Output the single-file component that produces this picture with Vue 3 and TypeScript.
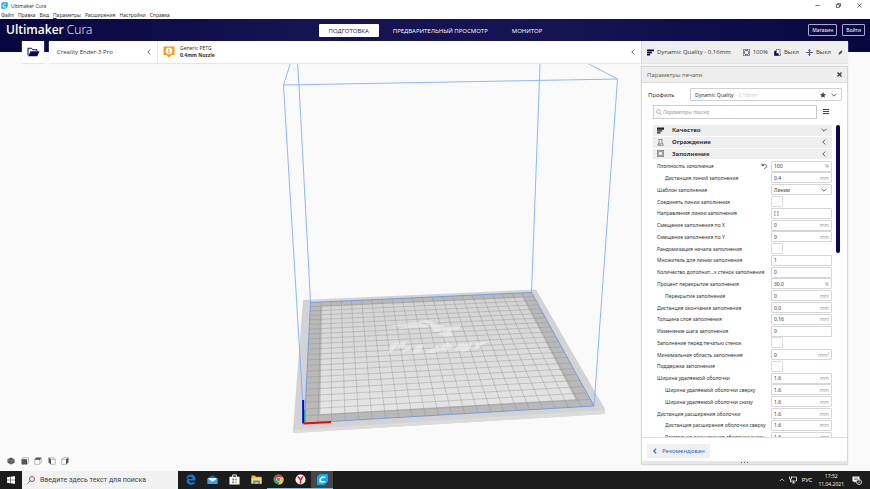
<script setup lang="ts">
interface Setting {
  label: string
  kind: 'text' | 'check' | 'select'
  value?: string
  unit?: string
  nested?: boolean
  changed?: boolean
}

const menus = ['Файл', 'Правка', 'Вид', 'Параметры', 'Расширения', 'Настройки', 'Справка']

const stages = ['ПОДГОТОВКА', 'ПРЕДВАРИТЕЛЬНЫЙ ПРОСМОТР', 'МОНИТОР']

const categories = [
  { name: 'Качество', icon: 'layers', open: true },
  { name: 'Ограждение', icon: 'shell', open: false },
  { name: 'Заполнение', icon: 'infill', open: false },
]

const settings: Setting[] = [
  { label: 'Плотность заполнения', kind: 'text', value: '100', unit: '%', changed: true },
  { label: 'Дистанция линий заполнения', kind: 'text', value: '0.4', unit: 'mm', nested: true },
  { label: 'Шаблон заполнения', kind: 'select', value: 'Линии' },
  { label: 'Соединять линии заполнения', kind: 'check' },
  { label: 'Направления линии заполнения', kind: 'text', value: '[ ]' },
  { label: 'Смещение заполнения по X', kind: 'text', value: '0', unit: 'mm' },
  { label: 'Смещение заполнения по Y', kind: 'text', value: '0', unit: 'mm' },
  { label: 'Рандомизация начала заполнения', kind: 'check' },
  { label: 'Множитель для линии заполнения', kind: 'text', value: '1' },
  { label: 'Количество дополнит...х стенок заполнения', kind: 'text', value: '0' },
  { label: 'Процент перекрытие заполнения', kind: 'text', value: '30.0', unit: '%' },
  { label: 'Перекрытие заполнения', kind: 'text', value: '0', unit: 'mm', nested: true },
  { label: 'Дистанция окончания заполнения', kind: 'text', value: '0.0', unit: 'mm' },
  { label: 'Толщина слоя заполнения', kind: 'text', value: '0.16', unit: 'mm' },
  { label: 'Изменение шага заполнения', kind: 'text', value: '0' },
  { label: 'Заполнение перед печатью стенок', kind: 'check' },
  { label: 'Минимальная область заполнения', kind: 'text', value: '0', unit: 'mm²' },
  { label: 'Поддержка заполнения', kind: 'check' },
  { label: 'Ширина удаляемой оболочки', kind: 'text', value: '1.6', unit: 'mm' },
  { label: 'Ширина удаляемой оболочки сверху', kind: 'text', value: '1.6', unit: 'mm', nested: true },
  { label: 'Ширина удаляемой оболочки снизу', kind: 'text', value: '1.6', unit: 'mm', nested: true },
  { label: 'Дистанция расширения оболочки', kind: 'text', value: '1.6', unit: 'mm' },
  { label: 'Дистанция расширения оболочки сверху', kind: 'text', value: '1.6', unit: 'mm', nested: true },
  { label: 'Расстояние расширения оболочки снизу', kind: 'text', value: '1.6', unit: 'mm', nested: true },
]

type Point = [number, number]

/* Projects the unit square of the build plate onto its four screen corners. */
function projector(tl: Point, tr: Point, br: Point, bl: Point) {
  const dx1 = tr[0] - br[0]
  const dx2 = bl[0] - br[0]
  const dx3 = tl[0] - tr[0] + br[0] - bl[0]
  const dy1 = tr[1] - br[1]
  const dy2 = bl[1] - br[1]
  const dy3 = tl[1] - tr[1] + br[1] - bl[1]
  const det = dx1 * dy2 - dx2 * dy1
  const g = (dx3 * dy2 - dx2 * dy3) / det
  const h = (dx1 * dy3 - dx3 * dy1) / det
  const a = tr[0] - tl[0] + g * tr[0]
  const b = bl[0] - tl[0] + h * bl[0]
  const d = tr[1] - tl[1] + g * tr[1]
  const e = bl[1] - tl[1] + h * bl[1]
  return (u: number, v: number): Point => {
    const w = g * u + h * v + 1
    return [(a * u + b * v + tl[0]) / w, (d * u + e * v + tl[1]) / w]
  }
}

const plate = projector([310.5, 302.5], [531.5, 292.5], [594, 406], [304.5, 423])
const CELLS = 22
const poly = (a: number, b: number) =>
  [plate(a, a), plate(b, a), plate(b, b), plate(a, b)].map((p) => p.map((n) => n.toFixed(2)).join(',')).join(' ')
const segment = (p: Point, q: Point) =>
  `M${p[0].toFixed(2)} ${p[1].toFixed(2)}L${q[0].toFixed(2)} ${q[1].toFixed(2)}`
const outer = poly(0, 1)
const inner = poly(1.15 / CELLS, 1 - 1.15 / CELLS)
const gridPath = Array.from({ length: CELLS - 1 }, (_, i) => (i + 1) / CELLS)
  .map((t) => segment(plate(t, 0), plate(t, 1)) + segment(plate(0, t), plate(1, t)))
  .join('')
</script>

<template>
  <div class="app">
    <div class="titlebar">
      <svg class="app-icon" viewBox="0 0 24 24" aria-hidden="true">
        <path d="M6 1h17v14l-8 8H1V6z" fill="#12a9e8" />
        <path d="M17 7H11L7 11v6h10" fill="none" stroke="#fff" stroke-width="3.4" />
      </svg>
      <span class="app-title">Ultimaker Cura</span>
      <div class="window-buttons">
        <button aria-label="Свернуть"><svg viewBox="0 0 12 12"><path d="M1 6h10" /></svg></button>
        <button aria-label="Окно"><svg viewBox="0 0 12 12"><path d="M1 4h7v7H1zM4 4V1h7v7H8" /></svg></button>
        <button aria-label="Закрыть"><svg viewBox="0 0 12 12"><path d="M1 1l10 10M11 1L1 11" /></svg></button>
      </div>
    </div>

    <nav class="menubar">
      <button v-for="m in menus" :key="m" :class="{ hot: m === 'Параметры' }">{{ m }}</button>
    </nav>

    <header class="header">
      <div class="logo"><b>Ultimaker</b> Cura</div>
      <nav class="stages">
        <button v-for="(s, i) in stages" :key="s" :class="{ active: i === 0 }">{{ s }}</button>
      </nav>
      <div class="account">
        <button>Магазин</button>
        <button>Войти</button>
      </div>
    </header>

    <section class="stagebar">
      <button class="open-file" aria-label="Открыть файл">
        <svg viewBox="0 0 26 20"><path d="M2 17V2.500h7l2.500 3H20V8" fill="none" stroke="#0a0850" stroke-width="2" /><path d="M7 8.500h18l-4.500 10H2.500z" fill="#0a0850" /></svg>
      </button>
      <div class="config">
        <button class="printer">
          <span>Creality Ender-3 Pro</span>
          <svg class="chev" viewBox="0 0 10 10"><path d="M7 1L3 5l4 4" /></svg>
        </button>
        <button class="material">
          <svg class="extruder" viewBox="0 0 24 24">
            <path d="M1 1h22v17h-6l-5 5-5-5H1z" fill="#f5a01c" />
            <circle cx="12" cy="10" r="6.500" fill="#fff" />
            <path d="M12 6v8M10.500 7.500L12 6" stroke="#f5a01c" stroke-width="2" fill="none" />
          </svg>
          <span class="material-text"><span>Generic PETG</span><b>0.4mm Nozzle</b></span>
          <svg class="chev" viewBox="0 0 10 10"><path d="M7 1L3 5l4 4" /></svg>
        </button>
        <button class="summary">
          <svg class="s-icon" viewBox="0 0 16 16"><path d="M0 1h16v4H0zM0 6.500h11v3.500H0zM0 11.500h7V15H0z" fill="#0a0850" /></svg>
          <span class="quality">Dynamic Quality - 0.16mm</span>
          <svg class="s-icon line" viewBox="0 0 16 16"><rect x="1" y="1" width="14" height="14" stroke-dasharray="3 1" /><path d="M5 3.500h6L13 6v4l-2 2.500H5L3 10V6z" /></svg>
          <span class="pct">100%</span>
          <svg class="s-icon line" viewBox="0 0 16 16"><path d="M1 5h4v5l5 1v4H1z" fill="#0a0850" /><path d="M5 5V1h9v10M11 15h4v-3" stroke-dasharray="3 1" /></svg>
          <span class="onoff">Выкл</span>
          <svg class="s-icon line" viewBox="0 0 16 16"><path d="M0 8h16M8 0v5M8 11v5M5.500 3L8 6l2.500-3M5.500 13L8 10l2.500 3" /></svg>
          <span class="onoff">Выкл</span>
          <svg class="pencil" viewBox="0 0 12 12"><path d="M1 11l1-4 6-6 3 3-6 6z" fill="#444" /></svg>
        </button>
      </div>
    </section>

    <main class="workspace">
      <svg class="scene" viewBox="0 52 870 419" role="img" aria-label="Стол принтера">
        <defs>
          <linearGradient id="plateShade" x1="0" y1="0" x2="0" y2="1">
            <stop offset="0" stop-color="#d3d3d3" />
            <stop offset="1" stop-color="#e5e5e5" />
          </linearGradient>
        </defs>
        <path d="M303 300L536 289.500 605 409v5L293 433v-3z" fill="#d3d3d3" />
        <path d="M293 430L605 410v4L293 433z" fill="#dcdcdc" />
        <polygon :points="outer" fill="#b9b9b9" />
        <polygon :points="inner" fill="url(#plateShade)" />
        <path :d="gridPath" fill="none" stroke="#8d8d8d" stroke-opacity=".42" stroke-width=".9" />
        <g fill="#f2f2f2" opacity=".6">
          <path d="M387 326l14-2h8l-4 2zM398 329l10-3 18-1 4 2-20 1z" />
          <path d="M402 324l18-2 6 3-16 2zM420 321l8-1 10 4-8 1zM430 325l12 0 4 5-12 2z" />
          <path d="M442 327l18-1v3l-12 2zM438 333l12-3 2 6-8 1z" />
          <path d="M381 357l7-3 3-10 8-2-4 6-5 5zM397 344l10-3-3 6-6 1zM401 353l9-3 2-5-7 3z" />
          <path d="M412 354l4-8 8-2-4 8zM424 353l8-4 6-4 2 5-6 3zM438 350l6-6 4-2 5 5-8 4z" />
          <path d="M455 350l3-6 14-1-2 6-6 3zM474 350l2-7 13-2-8 5z" />
        </g>
        <polygon :points="outer" fill="none" stroke="#6c98e0" stroke-width=".9" />
        <g fill="none" stroke="#80b0fb" stroke-width=".9">
          <path d="M290.500 63L283.500 85 617.500 79 587 63" />
          <path d="M297.500 63L299 85 310.500 302.500" />
          <path d="M283.500 85L304 423" />
          <path d="M540.500 52L531.500 293" />
          <path d="M617.500 79L594 406" />
        </g>
        <path d="M305 409.500v13" stroke="#10e030" stroke-width="1.500" />
        <path d="M303.200 400v23.500" stroke="#0000f0" stroke-width="2" />
        <path d="M303.500 423.500L331 422" stroke="#f00" stroke-width="2.200" />
      </svg>

      <div class="views">
        <button aria-label="3D-вид"><svg viewBox="0 0 16 16"><path d="M8 1l7 3.500v7L8 15l-7-3.500v-7z" fill="#555" /><path d="M1 5l7 3.500L15 5M8 8.500V15" stroke="#aaa" fill="none" /></svg></button>
        <button aria-label="Вид спереди"><svg viewBox="0 0 16 16"><path d="M4 1.500h11v10l-3 3V4.500H1.500z" fill="#fff" stroke="#777" /><path d="M1 4.500h11V15H1z" fill="#555" /></svg></button>
        <button aria-label="Вид сверху"><svg viewBox="0 0 16 16"><path d="M1.500 5h10v9.500h-10zM11.500 5l3-3v9l-3 3" fill="#fff" stroke="#777" /><path d="M4 1h11l-3 4.500H1z" fill="#555" /></svg></button>
        <button aria-label="Вид слева"><svg viewBox="0 0 16 16"><path d="M5 4.500h9.500v10H5zM1.500 1.500h9l4 3" fill="#fff" stroke="#777" /><path d="M1 1l5 3.500V15l-5-4z" fill="#555" /></svg></button>
        <button aria-label="Вид справа"><svg viewBox="0 0 16 16"><path d="M1.500 4.500H11v10H1.500zM1.500 4.500l4-3h9" fill="#fff" stroke="#777" /><path d="M10 4.500L15 1v10l-5 4z" fill="#555" /></svg></button>
      </div>

      <aside class="panel">
        <div class="panel-head">
          <h2>Параметры печати</h2>
          <button aria-label="Закрыть панель"><svg viewBox="0 0 10 10"><path d="M1 1l8 8M9 1L1 9" stroke="#333" stroke-width="2.200" /></svg></button>
        </div>

        <div class="profile">
          <span id="profile-label">Профиль</span>
          <button class="profile-select" aria-haspopup="listbox" aria-labelledby="profile-label">
            <span>Dynamic Quality</span><span class="dim">- 0.16mm</span>
            <svg class="star" viewBox="0 0 12 12"><path d="M6 0l1.800 4 4.200.4-3.200 2.900 1 4.400L6 9.400 2.200 11.700l1-4.400L0 4.400 4.200 4z" fill="#444" /></svg>
            <svg class="chev" viewBox="0 0 10 10"><path d="M1 3l4 4 4-4" /></svg>
          </button>
        </div>

        <div class="search-row">
          <label class="search">
            <svg viewBox="0 0 12 12"><circle cx="5" cy="5" r="4" /><path d="M8 8l4 4" /></svg>
            <input type="text" placeholder="Параметры поиска" aria-label="Параметры поиска" />
          </label>
          <button class="burger" aria-label="Видимость параметров"><svg viewBox="0 0 6 6"><path d="M0 .5h6M0 2.500h6M0 4.500h6" stroke="#444" stroke-width="1" /></svg></button>
        </div>

        <div class="list-wrap">
          <div class="list">
            <button v-for="c in categories" :key="c.name" class="category">
              <svg class="cat-icon" viewBox="0 0 16 16">
                <path v-if="c.icon === 'layers'" d="M0 1h16v5H0zM0 7.500h12v3H0zM0 12h8v3H0z" fill="#222" />
                <path v-else-if="c.icon === 'shell'" d="M3 1h10M5 1v5L1.500 14.500h13L11 6V1M4 11h3v3M8 10h4" class="stroke" />
                <path v-else d="M1 1h14v14H1zM5 3.500h6L13 6v4l-2 2.500H5L3 10V6zM1 1l3 3M15 1l-3 3M1 15l3-3M15 15l-3-3" class="stroke" />
              </svg>
              <span>{{ c.name }}</span>
              <svg class="chev" viewBox="0 0 10 10"><path :d="c.open ? 'M1 3l4 4 4-4' : 'M7 1L3 5l4 4'" /></svg>
            </button>

            <div v-for="(s, i) in settings" :key="s.label" class="setting">
              <label :for="`setting-${i}`" :class="{ nested: s.nested, changed: s.changed }">{{ s.label }}</label>
              <button v-if="s.changed" class="reset" aria-label="Сбросить">
                <svg viewBox="0 0 12 12"><path d="M2 1v4h4M2 5c3-4 9-2 9 1.500 0 3-3 4.500-5 4.500" fill="none" stroke="#333" stroke-width="1.500" /></svg>
              </button>
              <div v-if="s.kind === 'text'" class="field">
                <input :id="`setting-${i}`" type="text" :value="s.value" />
                <span v-if="s.unit" class="unit">{{ s.unit }}</span>
              </div>
              <div v-else-if="s.kind === 'select'" class="field">
                <select :id="`setting-${i}`"><option>{{ s.value }}</option></select>
                <svg class="chev" viewBox="0 0 10 10"><path d="M1 3l4 4 4-4" /></svg>
              </div>
              <div v-else class="check"><input :id="`setting-${i}`" type="checkbox" /></div>
            </div>
          </div>
          <div class="track"><div class="thumb"></div></div>
        </div>

        <div class="panel-foot">
          <button><svg class="chev" viewBox="0 0 10 10"><path d="M7 1L3 5l4 4" /></svg>Рекомендован</button>
        </div>
        <div class="grip"><i></i><i></i><i></i></div>
      </aside>
    </main>

    <footer class="taskbar">
      <button class="start" aria-label="Пуск"><svg viewBox="0 0 16 16"><path d="M0 2.500l7-1v6H0zM8 1.300L16 0v7.500H8zM0 8.500h7v6l-7-1zM8 8.500h8V16l-8-1.300z" fill="#fff" /></svg></button>
      <label class="task-search">
        <svg viewBox="0 0 16 16"><circle cx="10" cy="6" r="5" /><path d="M6.500 9.500L1 15" /></svg>
        <input type="text" placeholder="Введите здесь текст для поиска" aria-label="Поиск" />
      </label>
      <div class="apps">
        <button aria-label="Edge"><svg viewBox="0 0 24 24"><path d="M2 11C3 4 8 1 13 1c6 0 10 4 10 10v3H9c0 6 8 6 12 3v5C12 26 3 23 4 14c.5-4 3-6 6-7-1 1-2 2-2 4h8c0-7-9-6-14 0z" fill="#0f7bd8" /></svg></button>
        <button aria-label="Почта"><svg viewBox="0 0 24 24"><path d="M1 9L12 2l11 7v13H1z" fill="#1267b4" /><path d="M3 9h18v9H3z" fill="#fff" /><path d="M1 9l11 8 11-8v13H1z" fill="#29a6e8" /></svg></button>
        <button aria-label="Магазин"><svg viewBox="0 0 24 24"><path d="M8 7V2h8v5" fill="none" stroke="#fff" stroke-width="2" /><path d="M1 6h22v17H1z" fill="#fff" /><path d="M7 10h4v4H7z" fill="#e8502a" /><path d="M13 10h4v4h-4z" fill="#7cb82f" /><path d="M7 16h4v4H7z" fill="#2b9fe0" /><path d="M13 16h4v4h-4z" fill="#f8b713" /></svg></button>
        <button aria-label="Проводник"><svg viewBox="0 0 24 24"><path d="M1 3h8l2 3h12v15H1z" fill="#e9ae2c" /><path d="M1 8h22v13H1z" fill="#fbd766" /><path d="M5 14h14v8h-4v-4H9v4H5z" fill="#3e8fd0" /></svg></button>
        <button class="running" aria-label="Chrome"><svg viewBox="0 0 24 24"><circle cx="12" cy="12" r="11" fill="#35a552" /><path d="M2.500 6.500A11 11 0 0 1 22 7H12L8 14z" fill="#e23f33" /><path d="M22 7a11 11 0 0 1-11 16l5-9V7z" fill="#fbc914" /><circle cx="12" cy="12" r="5" fill="#fff" /><circle cx="12" cy="12" r="4" fill="#4285f4" /></svg></button>
        <button class="running" aria-label="Яндекс Браузер"><svg viewBox="0 0 24 24"><circle cx="12" cy="12" r="11" fill="#f4f4f4" /><path d="M6.500 5L12 13l5.500-8M12 12v9" fill="none" stroke="#e11d1d" stroke-width="3.200" /></svg></button>
        <button class="running current" aria-label="Cura"><svg viewBox="0 0 24 24"><path d="M6 0h18v16l-8 8H0V6z" fill="#12a9e8" /><path d="M18 7h-7L7 11v6h11" fill="none" stroke="#fff" stroke-width="3.200" /></svg></button>
      </div>
      <div class="tray">
        <svg class="t-icon" viewBox="0 0 16 16"><path d="M2 11l6-6 6 6" /></svg>
        <svg class="t-icon wide" viewBox="0 0 16 16"><path d="M4 2h11v8H4M9 10v4M6 14h6M1 1v5h4V1M3 6v6h2" /></svg>
        <span class="lang">РУС</span>
        <span class="clock"><span>17:52</span><span>11.04.2021</span></span>
        <button class="notify" aria-label="Уведомления: 2">
          <svg viewBox="0 0 16 16"><path d="M1 1h14v10H8l-3 3v-3H1z" fill="#fff" /><path d="M4 4h8M4 7h8" stroke="#222" /></svg>
          <span class="badge">2</span>
        </button>
      </div>
    </footer>
  </div>
</template>

<style>
body {
  margin: 0;
}
</style>

<style scoped>
.app {
  display: flex;
  flex-direction: column;
  height: 100vh;
  overflow: hidden;
  background: #fafafa;
  color: #333;
  font: 5px/8px "Noto Sans", "Open Sans", sans-serif;
}
.app * {
  box-sizing: border-box;
}
button,
input,
select {
  margin: 0;
  padding: 0;
  border: 0;
  border-radius: 0;
  background: none;
  color: inherit;
  font: inherit;
  outline: none;
}
svg {
  flex: none;
  display: block;
}
.chev {
  width: 6px;
  height: 6px;
  fill: none;
  stroke: #333;
  stroke-width: 1.3;
}

/* Title bar and menu */
.titlebar {
  display: flex;
  align-items: center;
  gap: 3px;
  height: 11px;
  flex: none;
  padding-left: 1px;
  background: #fff;
}
.app-icon {
  width: 7px;
  height: 7px;
}
.window-buttons {
  display: flex;
  margin-left: auto;
}
.window-buttons button {
  display: grid;
  place-items: center;
  width: 21px;
  height: 10px;
}
.window-buttons svg {
  width: 5px;
  height: 5px;
  fill: none;
  stroke: #222;
  stroke-width: 1.6;
}
.menubar {
  display: flex;
  gap: 4px;
  height: 8px;
  flex: none;
  padding-left: 1px;
  background: #fff;
}
.menubar button {
  line-height: 7px;
}
.hot::first-letter {
  text-decoration: underline;
}

/* Header */
.header {
  display: grid;
  grid-template-columns: 1fr auto 1fr;
  align-items: start;
  flex: none;
  height: 33px;
  padding: 5px 5px 0 6px;
  background: linear-gradient(90deg, #08073f, #161352 35%, #161352 65%, #08073f);
  color: #fff;
}
.logo {
  font-family: "Open Sans", "Noto Sans", sans-serif;
  font-size: 12px;
  line-height: 12px;
  font-weight: 300;
}
.logo b {
  font-weight: 600;
}
.stages {
  display: flex;
  gap: 4px;
}
.stages button {
  height: 13px;
  padding: 0 10px;
  border-radius: 1px;
  font-family: "Open Sans", "Noto Sans", sans-serif;
  font-size: 6px;
}
.stages .active {
  background: #fff;
  color: #161352;
}
.account {
  display: flex;
  justify-content: flex-end;
  gap: 5px;
}
.account button {
  height: 12px;
  padding: 0 3px;
  border: 1px solid #a9a8c8;
  border-radius: 1px;
  font-size: 5px;
}

/* Stage bar */
.stagebar {
  position: relative;
  z-index: 1;
  display: flex;
  gap: 5px;
  flex: none;
  height: 22px;
  margin: -11px 22px 0;
}
.open-file {
  display: grid;
  place-items: center;
  width: 22px;
  background: #fff;
  box-shadow: 0 1px 1px #e6e6e6;
}
.open-file svg {
  width: 13px;
  height: 10px;
}
.config {
  display: grid;
  grid-template-columns: 109px 1fr 207px;
  flex: 1;
  background: #fff;
  box-shadow: 0 1px 1px #e6e6e6;
  font-family: "Open Sans", "Noto Sans", sans-serif;
  font-size: 6px;
}
.config button {
  display: flex;
  align-items: center;
  text-align: left;
}
.config .printer {
  justify-content: space-between;
  padding: 0 5px 0 8px;
  border-right: 1px solid #e6e6e6;
}
.config .material {
  padding: 0 5px;
}
.extruder {
  width: 12px;
  height: 12px;
  margin-right: 5px;
}
.material-text {
  display: flex;
  flex-direction: column;
  flex: 1;
  font-family: "Noto Sans", sans-serif;
  font-size: 5px;
  line-height: 7px;
}
.config .summary {
  padding: 0 5px;
  border-left: 1px solid #d8d8d8;
  background: #eee;
}
.s-icon {
  width: 7px;
  height: 7px;
  margin-right: 3px;
}
.s-icon.line {
  fill: none;
  stroke: #0a0850;
  stroke-width: 1.4;
}
.quality {
  flex: 1;
}
.pct {
  margin-right: 6px;
}
.onoff {
  margin-right: 7px;
}
.pencil {
  width: 5px;
  height: 5px;
}

/* Workspace */
.workspace {
  position: relative;
  display: flex;
  justify-content: space-between;
  align-items: stretch;
  flex: 1;
  min-height: 0;
  padding: 3px 22px 6px 7px;
}
.scene {
  position: absolute;
  inset: -11px 0 0;
  width: 100%;
  height: calc(100% + 11px);
}
.views {
  position: relative;
  display: flex;
  justify-content: space-between;
  align-self: flex-end;
  width: 62px;
}
.views svg {
  width: 8px;
  height: 8px;
}

/* Settings panel */
.panel {
  position: relative;
  display: flex;
  flex-direction: column;
  width: 207px;
  border: 1px solid #d8d8d8;
  background: #fff;
  box-shadow: 0 0 1px #ccc;
}
.panel-head {
  display: flex;
  align-items: center;
  justify-content: space-between;
  flex: none;
  height: 16px;
  padding: 0 5px;
  border-bottom: 1px solid #ddd;
  background: #eee;
}
.panel-head h2 {
  margin: 0;
  color: #666;
  font-size: 6px;
  font-weight: 400;
}
.panel-head svg {
  width: 5px;
  height: 5px;
}
.profile {
  display: flex;
  align-items: center;
  flex: none;
  margin: 5px 5px 0 6px;
  font-size: 6px;
}
.profile > span {
  width: 42px;
}
.profile-select {
  display: flex;
  align-items: center;
  flex: 1;
  height: 13px;
  padding: 0 4px;
  border: 1px solid #d0d0d0;
  border-radius: 1px;
  font-size: 5px;
}
.dim {
  flex: 1;
  padding-left: 2px;
  color: #ccc;
  text-align: left;
}
.star {
  width: 6px;
  height: 6px;
  margin-right: 5px;
}
.search-row {
  display: flex;
  align-items: center;
  flex: none;
  gap: 6px;
  margin: 4px 18px 6px 11px;
}
.search {
  display: flex;
  align-items: center;
  flex: 1;
  gap: 1px;
  height: 14px;
  padding: 0 2px;
  border: 1px solid #ccc;
}
.search svg {
  width: 6px;
  height: 6px;
  fill: none;
  stroke: #777;
}
.search input {
  flex: 1;
  min-width: 0;
}
.search input::placeholder {
  color: #999;
  font-style: italic;
}
.burger svg {
  width: 6px;
  height: 6px;
}
.list-wrap {
  display: flex;
  gap: 4px;
  flex: 1;
  min-height: 0;
  margin: 0 7px 0 11px;
  overflow: hidden;
}
.list {
  display: grid;
  grid-template-rows: repeat(27, minmax(0, 1fr));
  flex: 1;
  height: 318px;
}
.category {
  display: flex;
  align-items: center;
  gap: 8px;
  margin-bottom: 1px;
  padding: 0 5px 0 4px;
  background: #eee;
  font-size: 6px;
  font-weight: 700;
  text-align: left;
}
.category span {
  flex: 1;
}
.cat-icon {
  width: 7px;
  height: 7px;
}
.stroke {
  fill: none;
  stroke: #444;
  stroke-width: 1.2;
}
.setting {
  display: flex;
  align-items: center;
  padding-left: 4px;
}
.setting label {
  flex: 1;
  white-space: nowrap;
}
.setting .nested {
  padding-left: 8px;
}
.setting .changed {
  font-style: italic;
}
.reset {
  margin-right: 4px;
}
.reset svg {
  width: 6px;
  height: 6px;
}
.field {
  display: flex;
  align-items: center;
  width: 61px;
  height: 11px;
  padding: 0 2px;
  border: 1px solid #d6d6d6;
  border-radius: 1px;
}
.field input,
.field select {
  flex: 1;
  min-width: 0;
  appearance: none;
}
.field .chev {
  margin-right: 2px;
}
.unit {
  color: #999;
}
.check {
  display: flex;
  width: 61px;
}
.check input {
  width: 12px;
  height: 11px;
  border: 1px solid #dcdcdc;
  border-radius: 1px;
  appearance: none;
}
.track {
  width: 4px;
}
.thumb {
  height: 41%;
  border-radius: 2px;
  background: #0a0850;
}
.panel-foot {
  flex: none;
  padding: 6px 5px 3px;
  border-top: 1px solid #ddd;
}
.panel-foot button {
  display: flex;
  align-items: center;
  gap: 4px;
  height: 14px;
  padding: 0 5px;
  background: #f0f0f0;
  color: #1d6fe0;
  font-size: 6px;
}
.panel-foot .chev {
  stroke: #1d6fe0;
  stroke-width: 2;
}
.grip {
  display: flex;
  align-items: center;
  justify-content: center;
  gap: 2px;
  flex: none;
  height: 3px;
  background: #e6e6e6;
}
.grip i {
  width: 1px;
  height: 1px;
  background: #555;
}

/* Taskbar */
.taskbar {
  display: flex;
  flex: none;
  height: 18px;
  background: #1c1c1c;
  color: #eee;
}
.start {
  display: grid;
  place-items: center;
  width: 22px;
}
.start svg {
  width: 8px;
  height: 8px;
}
.task-search {
  display: flex;
  align-items: center;
  gap: 5px;
  width: 156px;
  padding: 0 5px;
  background: #f1f1f1;
}
.task-search svg {
  width: 8px;
  height: 8px;
  fill: none;
  stroke: #222;
  stroke-width: 1.3;
}
.task-search input {
  flex: 1;
  min-width: 0;
  font-family: Roboto, "Open Sans", sans-serif;
  font-size: 7px;
}
.task-search input::placeholder {
  color: #444;
}
.apps {
  display: flex;
  padding-left: 1px;
}
.apps button {
  display: grid;
  place-items: center;
  width: 22px;
  border-bottom: 1px solid transparent;
}
.apps svg {
  width: 11px;
  height: 11px;
}
.apps .running {
  border-bottom-color: #76b9ed;
}
.apps .current {
  background: #464646;
}
.tray {
  display: flex;
  align-items: center;
  margin-left: auto;
  padding-right: 10px;
}
.t-icon {
  width: 6px;
  height: 6px;
  margin-right: 4px;
  fill: none;
  stroke: #fff;
  stroke-width: 1.8;
}
.t-icon.wide {
  width: 8px;
  height: 8px;
  margin-right: 5px;
  stroke-width: 1.5;
}
.lang {
  margin-right: 6px;
  font-size: 6px;
}
.clock {
  display: flex;
  flex-direction: column;
  align-items: center;
  margin-right: 8px;
}
.notify {
  position: relative;
}
.notify svg {
  width: 8px;
  height: 8px;
}
.badge {
  position: absolute;
  left: 4px;
  top: 3px;
  width: 6px;
  height: 6px;
  border: 1px solid #ccc;
  border-radius: 50%;
  background: #222;
  font-size: 4px;
  line-height: 4px;
}
</style>
